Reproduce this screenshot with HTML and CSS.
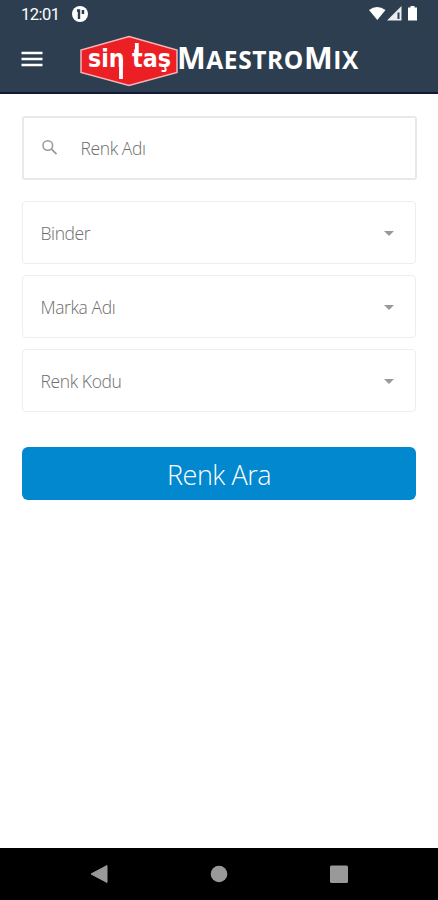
FILE: index.html
```html
<!DOCTYPE html>
<html lang="tr">
<head>
<meta charset="utf-8">
<title>MaestroMix</title>
<link rel="stylesheet" href="styles.css">
</head>
<body>
<div class="screen">
  <header class="header">
    <div class="status">
      <span class="clock">12:01</span>
      <svg class="notice" width="18" height="18" viewBox="0 0 18 18"><circle cx="9" cy="9" r="8" fill="#fff"/><path d="M6 4.300h3.200V14H6.800V7H6ZM10.700 5h2.500v4h-2.500Z" fill="#2d3e50"/></svg>
      <svg class="signals" width="52" height="18" viewBox="0 0 52 18"><path d="M1 5Q9-1 17.500 5L9.300 15Z" fill="#fff"/><path d="M19 15.500 33.500 1V15.500Z" fill="#fff" fill-opacity=".9"/><path d="M29.500 7.500h2v6.500h-2z" fill="#2d3e50"/><path d="M42.500 1h4v1.500H49V15.500h-9V2.500h2.500Z" fill="#fff"/></svg>
    </div>
    <div class="toolbar">
      <svg class="menu" width="22" height="18" viewBox="0 0 22 18"><path d="M.5 3h21M.5 9h21M.5 15h21" stroke="#fff" stroke-width="2.400"/></svg>
      <svg class="logo" width="98" height="52" viewBox="0 0 98 52">
        <path d="M49 1.500 97 15V37.500L49 50.500 1 37.500V15Z" fill="#ec1f24" stroke="#f5b5b8" stroke-width="1.500"/>
        <text class="logo-text" x="8" y="32" textLength="36.500" lengthAdjust="spacingAndGlyphs">sin</text>
        <text class="logo-text" x="52" y="32" textLength="39" lengthAdjust="spacingAndGlyphs">taş</text>
        <path d="M41 24V44M56.800 8V20" stroke="#fff" stroke-width="3.800"/>
      </svg>
      <h1 class="title">M<span class="small">AESTRO</span>M<span class="small">IX</span></h1>
    </div>
  </header>
  <main class="content">
    <div class="search">
      <svg width="18" height="18" viewBox="0 0 18 18"><circle cx="6.800" cy="6.500" r="4.800" fill="none" stroke="#999" stroke-width="1.500"/><path d="m10.500 10.200 5 5" stroke="#999" stroke-width="1.800"/></svg>
      <span class="label">Renk Adı</span>
    </div>
    <div class="selects">
      <div class="select"><span class="label">Binder</span><i class="caret"></i></div>
      <div class="select"><span class="label">Marka Adı</span><i class="caret"></i></div>
      <div class="select"><span class="label">Renk Kodu</span><i class="caret"></i></div>
    </div>
    <button class="submit">Renk Ara</button>
  </main>
  <nav class="nav">
    <svg width="18" height="20" viewBox="0 0 18 20"><path d="M17 1.500v17L1 10Z" fill="#999" stroke="#999" stroke-linejoin="round"/></svg>
    <svg width="18" height="20" viewBox="0 0 18 20"><circle cx="9" cy="10" r="8.300" fill="#999"/></svg>
    <svg width="18" height="20" viewBox="0 0 18 20"><rect y="1.500" width="18" height="17.500" rx="1.500" fill="#999"/></svg>
  </nav>
</div>
</body>
</html>
```
FILE: styles.css
```css
* { box-sizing: border-box; }
body { margin: 0; background: #fff; font-family: "Open Sans", sans-serif; }
.screen { height: 900px; display: flex; flex-direction: column; }
.header { height: 94px; background: #2d3e50; border-bottom: 2px solid #12183a; color: #fff; }
.status { height: 28px; display: flex; align-items: center; padding: 0 18px 0 21px; }
.clock { font: 16.5px/28px Roboto, sans-serif; width: 50px; letter-spacing: -.5px; padding-top: 1px; }
.signals { margin-left: auto; }
.toolbar { height: 64px; display: flex; align-items: center; padding-left: 21px; }
.menu { margin-right: 37px; margin-top: -2px; }
.logo { margin-top: 2px; }
.logo-text { font: bold 25px "DejaVu Sans Condensed", "DejaVu Sans", sans-serif; fill: #fff; }
.title { margin: -4px 0 0 -1px; font-size: 30.500px; line-height: 40px; font-weight: 700; white-space: nowrap; letter-spacing: .6px; }
.small { font-size: 24.500px; }
.content { flex: 1; padding: 22px 22px 0; }
.search, .select { display: flex; align-items: center; background: #fff; }
.search { height: 64px; width: 395px; border: 2px solid #e9e9e9; border-radius: 3px; padding-left: 17px; }
.search .label { margin-left: 21.500px; }
.selects { margin-top: 21px; display: grid; gap: 11px; }
.select { height: 63px; border: 1.500px solid #eee; border-radius: 4px; padding: 1px 21px 0 17.500px; justify-content: space-between; }
.label { color: #6c6c6c; font-size: 17.500px; font-weight: 300; letter-spacing: -.4px; }
.caret { border: 5.500px solid transparent; border-top: 5.500px solid #999; border-bottom: 0; }
.submit { display: block; width: 100%; height: 53px; margin-top: 35px; padding: 1px 0 0; border: 0; border-radius: 6px; background: #0288ce; color: #fff; font: 300 27px "Open Sans", sans-serif; letter-spacing: -.5px; }
.nav { height: 52px; background: #000; display: flex; justify-content: space-between; align-items: center; padding: 0 90px; }
```
